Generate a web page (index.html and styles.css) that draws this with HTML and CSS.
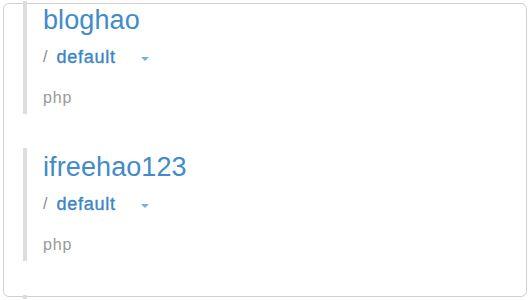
FILE: index.html
```html
<!DOCTYPE html>
<html>
<head>
<meta charset="utf-8">
<link rel="stylesheet" href="styles.css">
</head>
<body>
<div class="card">
  <ul class="repo-list">
    <li class="repo">
      <div class="repo-name">bloghao</div>
      <div class="branch-row">
        <span class="sep">/</span>
        <span class="branch">default</span>
        <span class="caret"></span>
      </div>
      <div class="lang">php</div>
    </li>
    <li class="repo">
      <div class="repo-name">ifreehao123</div>
      <div class="branch-row">
        <span class="sep">/</span>
        <span class="branch">default</span>
        <span class="caret"></span>
      </div>
      <div class="lang">php</div>
    </li>
    <li class="repo repo-stub"></li>
  </ul>
</div>
</body>
</html>
```

FILE: styles.css
```css
html, body {
  margin: 0;
  padding: 0;
  background: #ffffff;
}
html {
  height: 300px;
  overflow: hidden;
}
body {
  padding: 3px;
  font-family: "Liberation Sans", Arial, sans-serif;
}
.card {
  box-sizing: border-box;
  height: 294px;
  border: 1px solid #cfcfd4;
  border-radius: 6px;
  padding: 0 19px;
  overflow: visible;
}
.repo-list {
  list-style: none;
  margin: -3px 0 0 0;
  padding: 0;
}
.repo {
  box-sizing: border-box;
  height: 113px;
  margin-bottom: 34px;
  border-left: 4px solid #dddddd;
  padding: 4px 0 0 16px;
  overflow: hidden;
}
.repo-stub {
  height: 3px;
  margin-bottom: 0;
}
.repo-name {
  font-size: 27px;
  line-height: 30px;
  color: #428bca;
  letter-spacing: 0.1px;
}
.branch-row {
  display: flex;
  align-items: center;
  margin-top: 12px;
  height: 20px;
}
.sep {
  font-size: 16px;
  line-height: 20px;
  color: #888888;
  margin-right: 9px;
}
.branch {
  font-size: 18px;
  line-height: 20px;
  color: #3a85c8;
  font-weight: normal;
  letter-spacing: 0.75px;
  -webkit-text-stroke: 0.35px #3a85c8;
}
.caret {
  width: 0;
  height: 0;
  margin-left: 25px;
  margin-top: 4px;
  border-top: 4px solid #7aaee0;
  border-left: 4px solid transparent;
  border-right: 4px solid transparent;
}
.lang {
  margin-top: 22px;
  font-size: 16px;
  line-height: 18px;
  color: #999999;
  letter-spacing: 0.8px;
}
```
